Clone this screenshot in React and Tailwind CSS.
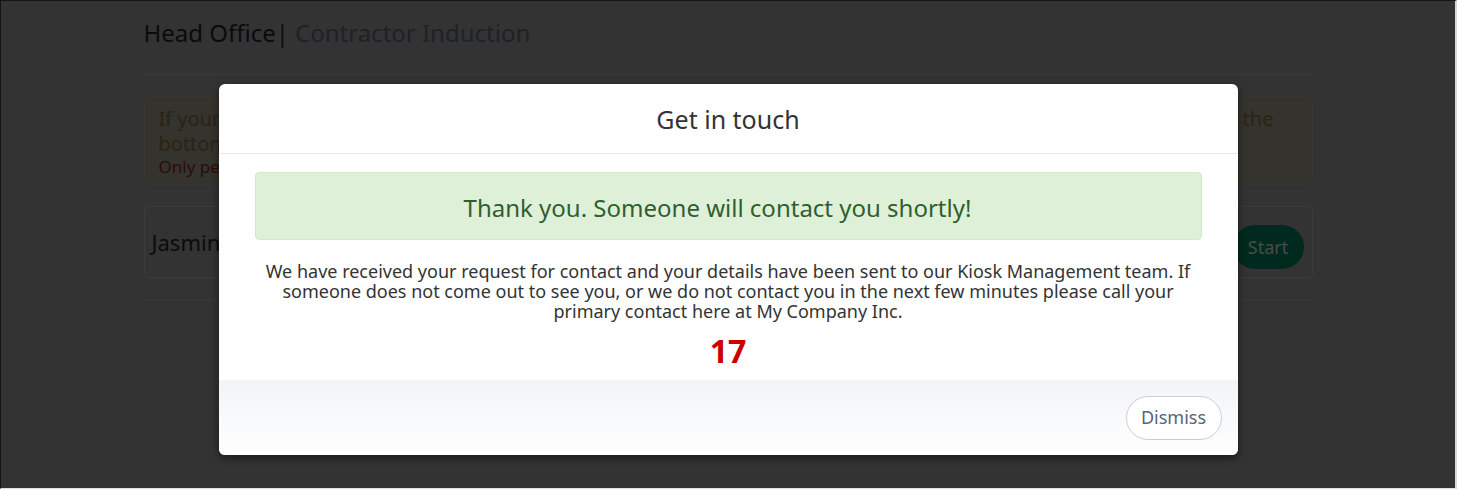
export default function App() {
  return (
    <div
      className="relative h-[489px] w-[1457px] overflow-hidden border-t border-l border-r-2 border-b border-t-[#141414] border-l-[#141414] border-r-[#d9d9d9] border-b-[#e0e0e0] bg-[#333333]"
      style={{ fontFamily: '"Noto Sans", "Open Sans", sans-serif' }}
    >
      {/* dimmed page behind the dialog */}
      <div className="mx-auto w-[1169px]">
        <div className="flex h-[64px] items-center text-[24px] leading-none">
          <span className="text-[#0b0b0b]">Head Office</span>
          <span className="text-[#0b0b0b]">|</span>
          <span className="ml-[6px] text-[#1d2229]">Contractor Induction</span>
        </div>
        <div className="mt-[9px] border-t border-[#3a3a3a]" />
        <div className="mt-[21px] h-[89px] rounded-[4px] border border-[#36352f] bg-[#34332d] pl-[14px] pr-[38px] pt-[9px]">
          <div className="flex justify-between text-[20px] leading-[25px] text-[#2b2314]">
            <span>If your company is not listed below, please press the Get in touch button at</span>
            <span>the</span>
          </div>
          <p className="text-[20px] leading-[25px] text-[#2b2314]">bottom of the screen and someone will come to help you.</p>
          <p className="text-[17px] leading-[22px] text-[#2e0b0c]">Only people who have been invited may complete an induction.</p>
        </div>
        <div className="mt-[21px] flex h-[72px] items-start justify-between rounded-[4px] border border-[#3b3b3b] pl-[7px] pr-[8px]">
          <span className="mt-[19px] text-[22px] leading-[32px] text-[#0b0b0b]">Jasmine</span>
          <span className="mt-[18px] flex h-[44px] w-[71px] items-center justify-center rounded-full bg-[#012a1f] text-[18px] text-[#4a4a4a]">
            Start
          </span>
        </div>
        <div className="mt-[21px] border-t border-[#383838]" />
      </div>

      {/* dialog */}
      <div className="absolute inset-0 flex justify-center pt-[83px]">
        <div className="flex h-[371px] w-[1019px] flex-col overflow-hidden rounded-[6px] bg-white shadow-[0_3px_9px_rgba(0,0,0,0.5)]">
          <div className="flex h-[70px] shrink-0 items-center justify-center border-b border-[#e8e8e8] pt-[2px]">
            <h2 className="text-[25px] text-[#333333]">Get in touch</h2>
          </div>
          <div className="flex flex-1 flex-col items-center px-[36px] pt-[18px]">
            <div className="flex h-[68px] w-full items-center justify-center rounded-[4px] border border-[#d6e9c6] bg-[#dff0d8] pr-[21px] pt-[3px] text-[24px] text-[#2f5f2f]">
              Thank you. Someone will contact you shortly!
            </div>
            <p className="mt-[21px] text-center text-[18px] leading-[20px] text-[#333333]">
              We have received your request for contact and your details have been sent to our Kiosk Management team. If
              someone does not come out to see you, or we do not contact you in the next few minutes please call your
              primary contact here at My Company Inc.
            </p>
            <div className="mt-[11px] text-[32px] font-bold leading-[38px] text-[#cc0000]">17</div>
          </div>
          <div className="flex h-[75px] shrink-0 items-center justify-end bg-gradient-to-b from-[#f3f4f7] to-white pr-[16px]">
            <button
              type="button"
              className="h-[44px] w-[96px] rounded-full border border-[#c7d0d8] bg-white text-[18px] text-[#56657a]"
            >
              Dismiss
            </button>
          </div>
        </div>
      </div>
    </div>
  );
}
